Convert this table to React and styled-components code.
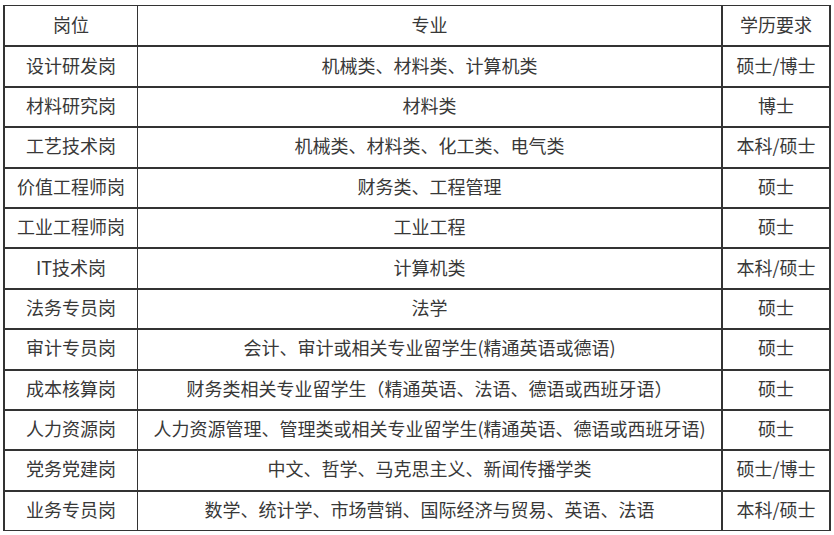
import React from "react";
import styled, { createGlobalStyle } from "styled-components";

const Global = createGlobalStyle`
  html, body { margin: 0; padding: 0; background: #fff; }
  body { font-family: "Noto Sans CJK SC", "Noto Sans", sans-serif; color: #333; }
`;

const Table = styled.div`
  box-sizing: border-box;
  width: 828px;
  margin: 5px 0 0 3px;
  border-left: 2px solid #333;
  border-right: 2px solid #333;
  border-top: 1px solid #333;
  border-bottom: 1px solid #333;
`;

const Row = styled.div`
  box-sizing: border-box;
  display: grid;
  grid-template-columns: 133px 585px 106px;
  height: ${(p) => (p.$first ? "39.4px" : "40.4px")};
  border-top: ${(p) => (p.$first ? "none" : "2px solid #333")};
`;

const Cell = styled.div`
  box-sizing: border-box;
  display: flex;
  align-items: center;
  justify-content: center;
  padding-bottom: 4px;
  font-size: 18px;
  line-height: 1;
  white-space: nowrap;
  color: #383838;
  border-right: ${(p) => (p.$border ? `${p.$border}px solid #333` : "none")};
`;

const rows = [
  ["岗位", "专业", "学历要求"],
  ["设计研发岗", "机械类、材料类、计算机类", "硕士/博士"],
  ["材料研究岗", "材料类", "博士"],
  ["工艺技术岗", "机械类、材料类、化工类、电气类", "本科/硕士"],
  ["价值工程师岗", "财务类、工程管理", "硕士"],
  ["工业工程师岗", "工业工程", "硕士"],
  ["IT技术岗", "计算机类", "本科/硕士"],
  ["法务专员岗", "法学", "硕士"],
  ["审计专员岗", "会计、审计或相关专业留学生(精通英语或德语)", "硕士"],
  ["成本核算岗", "财务类相关专业留学生（精通英语、法语、德语或西班牙语）", "硕士"],
  ["人力资源岗", "人力资源管理、管理类或相关专业留学生(精通英语、德语或西班牙语)", "硕士"],
  ["党务党建岗", "中文、哲学、马克思主义、新闻传播学类", "硕士/博士"],
  ["业务专员岗", "数学、统计学、市场营销、国际经济与贸易、英语、法语", "本科/硕士"],
];

export default function App() {
  return (
    <>
      <Global />
      <Table>
        {rows.map((r, i) => (
          <Row key={i} $first={i === 0}>
            <Cell $border={1}>{r[0]}</Cell>
            <Cell $border={2}>{r[1]}</Cell>
            <Cell>{r[2]}</Cell>
          </Row>
        ))}
      </Table>
    </>
  );
}
